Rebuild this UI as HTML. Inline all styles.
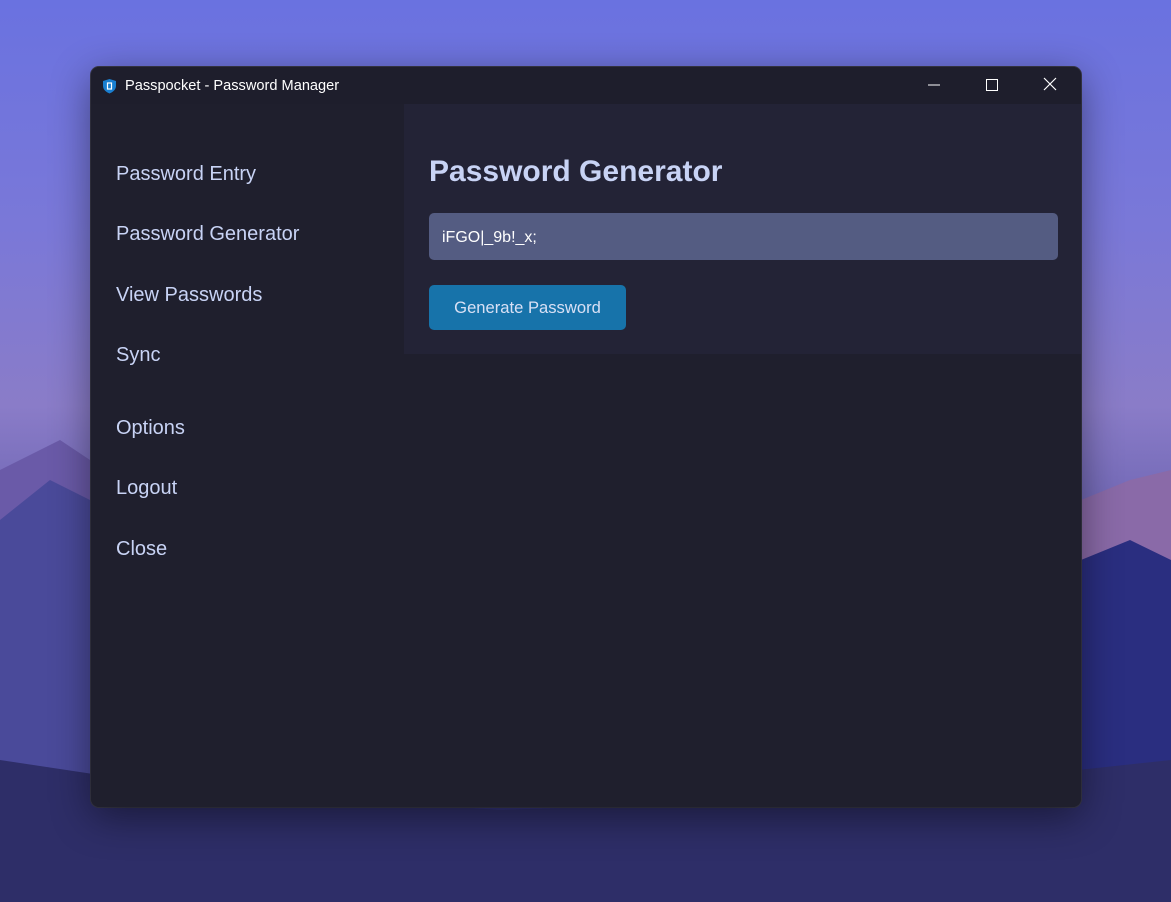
<!DOCTYPE html>
<html><head><meta charset="utf-8"><style>
*{margin:0;padding:0;box-sizing:border-box}
body{width:1171px;height:902px;overflow:hidden;position:relative;font-family:"Liberation Sans",sans-serif;
background:linear-gradient(180deg,#6a72e0 0%,#7a78d8 25%,#8a7cc8 45%,#6a62b0 60%,#3a3a90 80%,#2a2a60 100%)}
.bg{position:absolute;left:0;top:0}
.win{position:absolute;left:91px;top:67px;width:990px;height:740px;background:#1f1f2d;border-radius:8px;overflow:hidden;box-shadow:0 10px 40px rgba(0,0,0,.45),0 0 0 1px #3a3a4a}
.tb{height:37px;background:#1e1e2c;color:#fff;font-size:14.6px;display:flex;align-items:center;padding-left:11px}
.side a{position:absolute;left:25px;color:#c8d3f5;font-size:20px;text-decoration:none}
.panel{position:absolute;left:313px;top:37px;width:677px;height:250px;background:#232336}
h1{position:absolute;left:25px;top:50px;color:#c8d3f5;font-size:30px;font-weight:bold}
.inp{position:absolute;left:25px;top:109px;width:629px;height:47px;background:#545c82;border-radius:5px;color:#fff;font-size:16px;padding:16px 13px 0}
.btn{position:absolute;left:25px;top:181px;width:197px;height:45px;background:#1773aa;border-radius:5px;color:#d8e0f5;font-size:16.6px;text-align:center;line-height:46px}
</style></head><body>
<svg class="bg" width="1171" height="902">
<path d="M0 470 L60 440 L90 460 L90 902 L0 902Z" fill="#6a5aa8"/>
<path d="M0 520 L50 480 L90 500 L90 902 L0 902Z" fill="#4a4a9a"/>
<path d="M1081 500 L1130 480 L1171 470 L1171 902 L1081 902Z" fill="#8a6aa8"/>
<path d="M1081 560 L1130 540 L1171 560 L1171 902 L1081 902Z" fill="#2a2e80"/>
<path d="M0 760 L200 790 L500 810 L800 800 L1171 760 L1171 902 L0 902Z" fill="#2e2e68"/>
</svg>
<div class="win">
<div class="tb"><svg width="15" height="16" viewBox="0 0 15 16" style="margin-right:8px"><path d="M7.5 1 L14 3 L14 8 C14 12 10 14.5 7.5 15.5 C5 14.5 1 12 1 8 L1 3Z" fill="#1a7fd0"/><rect x="5.5" y="5" width="4" height="6" fill="none" stroke="#fff" stroke-width="1.2"/></svg>Passpocket - Password Manager
<svg style="position:absolute;left:836px;top:11px" width="14" height="14"><line x1="1" y1="7" x2="13" y2="7" stroke="#fff"/></svg>
<svg style="position:absolute;left:894px;top:11px" width="14" height="14"><rect x="1.5" y="1.5" width="11" height="11" fill="none" stroke="#fff"/></svg>
<svg style="position:absolute;left:952px;top:10px" width="14" height="14"><path d="M1 1L13 13M13 1L1 13" stroke="#fff" stroke-width="1.2"/></svg>
</div>
<div class="side">
<a style="top:96px">Password Entry</a>
<a style="top:156px">Password Generator</a>
<a style="top:217px">View Passwords</a>
<a style="top:277px">Sync</a>
<a style="top:350px">Options</a>
<a style="top:410px">Logout</a>
<a style="top:471px">Close</a>
</div>
<div class="panel">
<h1 style="top:51px">Password Generator</h1>
<div class="inp">iFGO|_9b!_x;</div>
<div class="btn">Generate Password</div>
</div>
</div>
</body></html>
